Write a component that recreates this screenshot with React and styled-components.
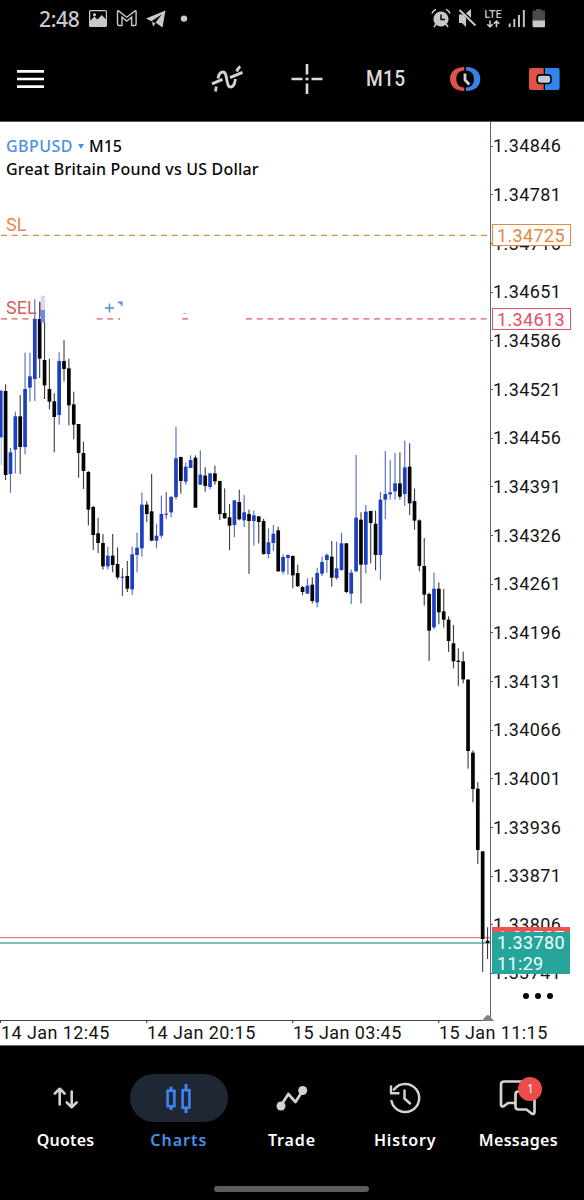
import React from "react";
import styled, { createGlobalStyle } from "styled-components";

const Global = createGlobalStyle`
  * { box-sizing: border-box; }
  body { margin: 0; background: #000; }
  svg { display: block; flex: none; }
`;

const rounded = `"Noto Sans", "Open Sans", sans-serif`;
const numeric = `Roboto, "Liberation Sans", sans-serif`;

const Screen = styled.div`
  width: 584px;
  height: 1200px;
  display: flex;
  flex-direction: column;
  background: #000;
  overflow: hidden;
`;

const StatusBar = styled.header`
  height: 38px;
  display: flex;
  justify-content: space-between;
  padding: 0 38px 0 39px;
  color: #c9c9c9;
`;

const Clock = styled.span`
  width: 49px;
  font: 500 21px/38px ${rounded};
  letter-spacing: -0.3px;
  white-space: nowrap;
`;

const StatusGroup = styled.div`
  display: flex;
`;

const Toolbar = styled.div`
  height: 83px;
  display: flex;
  align-items: center;
  padding: 0 24px 1px 16px;
`;

const ToolButton = styled.button`
  display: flex;
  align-items: center;
  justify-content: center;
  border: 0;
  padding: 0;
  margin-left: ${(p) => p.$gap || 0}px;
  width: ${(p) => p.$w || 32}px;
  height: 40px;
  background: none;
  color: #dcdcdc;
  font: 500 22px/40px ${numeric};
  letter-spacing: 0.4px;
`;

const Condensed = styled.span`
  transform: scaleX(0.87);
`;

const Chart = styled.main`
  position: relative;
  height: 925px;
  display: grid;
  grid-template-columns: 490px 94px;
  grid-template-rows: 898px 25px;
  border-top: 1px solid #55555a;
  border-bottom: 1px solid #666;
  background: #fff;
  overflow: hidden;
`;

const Plot = styled.div`
  position: relative;
  z-index: 1;
`;

const Heading = styled.div`
  position: absolute;
  top: 13px;
  left: 6px;
  font: 500 16px/23px ${rounded};
  color: #080808;
  white-space: nowrap;
`;

const SymbolLine = styled.div`
  display: flex;
  align-items: center;
`;

const SymbolName = styled.span`
  width: 68px;
  color: #4a90ea;
  letter-spacing: 0.45px;
`;

const Caret = styled.span`
  width: 6px;
  margin: 0 5px 0 4px;
  border: 3px solid transparent;
  border-top: 5px solid #4a90ea;
  border-bottom: 0;
`;

const PairName = styled.div`
  letter-spacing: 0.18px;
`;

const LevelName = styled.span`
  position: absolute;
  left: 6px;
  top: ${(p) => p.$top}px;
  font: 400 18px/22px ${numeric};
  color: ${(p) => p.$color};
`;

const Scale = styled.div`
  position: relative;
  border-left: 1px solid #64646e;
`;

const Prices = styled.div`
  height: 898px;
  overflow: hidden;
`;

const Price = styled.div`
  height: 48.66px;
  display: flex;
  align-items: center;
  font: 400 18px/22px ${numeric};
  letter-spacing: 0.4px;
  color: #141414;
  &::before {
    content: "";
    width: 2px;
    height: 1px;
    background: #555;
  }
`;

const PriceBox = styled.div`
  position: absolute;
  left: 1px;
  top: ${(p) => p.$top}px;
  width: 79px;
  height: 22px;
  padding-left: 4px;
  border: 1px solid ${(p) => p.$color};
  background: #fff;
  color: ${(p) => p.$color};
  font: 400 18px/21px ${numeric};
  letter-spacing: 0.35px;
`;

const Quote = styled.div`
  position: absolute;
  left: 1px;
  top: ${(p) => p.$top}px;
  width: 78px;
  height: ${(p) => p.$h}px;
  padding-left: 5px;
  background: ${(p) => p.$color};
  color: #f3fffd;
  font: 400 18px/21px ${numeric};
  letter-spacing: 0.35px;
`;

const More = styled.div`
  position: absolute;
  left: 32px;
  top: 871px;
  display: flex;
  gap: 6px;
`;

const Dot = styled.i`
  width: 6px;
  height: 6px;
  border-radius: 50%;
  background: #000;
`;

const TimeAxis = styled.div`
  grid-column: 1 / -1;
  display: flex;
  padding-left: 1px;
`;

const Time = styled.span`
  width: 146px;
  flex: none;
  font: 400 18px/26px ${numeric};
  letter-spacing: 0.42px;
  color: #141414;
  white-space: nowrap;
`;

const Nav = styled.nav`
  height: 110px;
  display: flex;
  padding: 28px 9px 0 9px;
`;

const NavItem = styled.div`
  width: 113.2px;
  display: flex;
  flex-direction: column;
  align-items: center;
  color: ${(p) => (p.$active ? "#478fee" : "#fff")};
`;

const Pill = styled.div`
  width: 98px;
  height: 48px;
  display: flex;
  align-items: center;
  justify-content: center;
  border-radius: 24px;
  background: ${(p) => (p.$active ? "#202734" : "transparent")};
`;

const NavLabel = styled.span`
  margin-top: 6px;
  font: 600 16px/24px ${rounded};
  letter-spacing: ${(p) => p.$track}px;
  white-space: nowrap;
`;

const IconWrap = styled.div`
  position: relative;
`;

const Badge = styled.span`
  position: absolute;
  left: 19px;
  top: -3px;
  width: 24px;
  height: 24px;
  border-radius: 50%;
  background: #ee4b4b;
  color: #fff;
  text-align: center;
  font: 400 12px/24px ${rounded};
`;

const HomeBar = styled.div`
  width: 155px;
  height: 6px;
  margin: 30px 0 0 214px;
  border-radius: 3px;
  background: #5c5c5c;
`;

const UP = "u";
const DOWN = "b";
const FLAT = "f";
const STEP = 4.868;
const FIRST_X = 5.6;
const TOP = 122;

// Each run: offset in px, then [direction, high, open/close top, open/close bottom, low] in third-pixels.
const RUNS = [
  [290, [
    [DOWN, 283, 303, 555, 570], [UP, 474, 487, 552, 608], [UP, 365, 379, 479, 550], [DOWN, 315, 379, 471, 552],
    [UP, 188, 297, 471, 493], [UP, 188, 259, 293, 335], [UP, 28, 87, 267, 333], [DOWN, 35, 87, 206, 264],
    [DOWN, 95, 210, 286, 327], [DOWN, 206, 297, 335, 358], [DOWN, 310, 334, 381, 487], [UP, 187, 213, 375, 404],
    [DOWN, 151, 213, 237, 274], [DOWN, 206, 235, 346, 406], [DOWN, 305, 343, 404, 448], [DOWN, 402, 402, 489, 563],
    [DOWN, 455, 489, 543, 597], [DOWN, 543, 546, 659, 706], [DOWN, 647, 651, 735, 780], [DOWN, 683, 730, 759, 789],
    [DOWN, 732, 759, 829, 839], [UP, 770, 797, 829, 839], [DOWN, 732, 797, 825, 847], [DOWN, 772, 822, 862, 868],
    [FLAT, 835, 860, 863, 918], [DOWN, 813, 858, 896, 906], [UP, 770, 793, 898, 915], [UP, 728, 773, 795, 847],
    [UP, 608, 644, 775, 800], [DOWN, 634, 644, 672, 696], [DOWN, 552, 664, 752, 754], [UP, 702, 737, 752, 775],
    [UP, 617, 672, 737, 745],
  ]],
  [400, [
    [FLAT, 276, 341, 344, 356], [UP, 288, 291, 337, 352], [UP, 80, 175, 291, 299], [DOWN, 170, 171, 243, 281],
    [UP, 187, 200, 245, 254], [UP, 166, 180, 204, 204], [DOWN, 166, 173, 323, 323], [UP, 151, 224, 254, 254],
    [DOWN, 202, 227, 258, 275], [UP, 219, 220, 261, 268], [DOWN, 197, 220, 244, 254], [DOWN, 242, 243, 342, 360],
    [DOWN, 265, 339, 355, 356], [DOWN, 312, 352, 377, 451], [UP, 300, 301, 375, 411], [DOWN, 269, 306, 358, 361],
    [UP, 285, 337, 361, 381], [DOWN, 329, 342, 363, 522], [UP, 332, 346, 363, 437], [DOWN, 348, 349, 366, 430],
    [DOWN, 356, 363, 462, 464], [UP, 385, 427, 462, 475], [UP, 375, 401, 429, 453], [DOWN, 380, 391, 514, 515],
  ]],
  [430, [
    [UP, 373, 381, 425, 433], [UP, 373, 375, 384, 434], [DOWN, 376, 378, 436, 475], [DOWN, 404, 429, 469, 470],
    [DOWN, 468, 471, 486, 495], [UP, 445, 467, 491, 491], [DOWN, 442, 464, 513, 520], [UP, 413, 429, 517, 532],
    [UP, 380, 396, 431, 438], [UP, 370, 375, 390, 428], [DOWN, 333, 380, 443, 470], [UP, 335, 415, 444, 449],
    [UP, 308, 340, 420, 422], [DOWN, 339, 340, 486, 489], [UP, 418, 428, 491, 522], [UP, 75, 263, 424, 425],
    [DOWN, 247, 269, 404, 520], [UP, 225, 245, 404, 430], [DOWN, 242, 243, 279, 400], [DOWN, 242, 281, 375, 421],
    [UP, 186, 209, 375, 451], [UP, 63, 192, 209, 268], [UP, 91, 187, 193, 209], [UP, 69, 160, 184, 209],
    [DOWN, 67, 160, 200, 209], [UP, 32, 112, 192, 228], [DOWN, 40, 110, 220, 255], [DOWN, 176, 213, 272, 299],
    [DOWN, 268, 271, 408, 424], [DOWN, 324, 408, 494, 527], [DOWN, 488, 492, 602, 693], [UP, 428, 476, 592, 598],
    [DOWN, 457, 476, 547, 583], [DOWN, 477, 544, 569, 593], [DOWN, 559, 569, 633, 666], [DOWN, 585, 640, 694, 715],
  ]],
  [640, [
    [DOWN, 25, 62, 66, 138], [DOWN, 35, 64, 118, 130], [DOWN, 117, 119, 333, 386], [DOWN, 331, 338, 447, 487],
    [DOWN, 426, 446, 630, 672], [DOWN, 633, 634, 897, 996], [DOWN, 862, 902, 909, 957],
  ]],
];

const CANDLES = RUNS.flatMap(([base, rows]) =>
  rows.map(([dir, ...ys]) => [dir, ...ys.map((v) => base + v / 3 - TOP)])
);

const BODY = { u: "#1d3fc0", b: "#050505", f: "#4a1fa8" };
const WICK = { u: "#4c68c6", b: "#3c3c38", f: "#6238b8" };

function Candle({ index, data }) {
  const [dir, high, top, bottom, low] = data;
  const x = FIRST_X + index * STEP;
  return (
    <g>
      <rect x={x - 0.55} y={high} width="1.1" height={low - high} fill={WICK[dir]} />
      <rect x={x - 1.85} y={top} width="3.7" height={Math.max(bottom - top, 1)} fill={BODY[dir]} />
    </g>
  );
}

function PlotDrawing() {
  return (
    <svg width="490" height="898" viewBox="0 0 490 898" overflow="visible">
      <path d="M1 113.4H490" stroke="#dc8d4c" strokeWidth="1.3" strokeDasharray="6 4.667" />
      <path d="M1 196.8H34M96.5 196.8H120M182 196.8H188M246 196.8H490" stroke="#d75b60" strokeWidth="1.3" strokeDasharray="6 4.667" />
      <path d="M0 815.7H490" stroke="#e58080" strokeWidth="1.2" />
      <path d="M0 821H490" stroke="#58aaa0" strokeWidth="1.3" />
      <rect x="0" y="268.5" width="2.6" height="47" fill="#1d3fc0" />
      <rect x="0.7" y="315" width="1" height="28" fill="#a8b4e0" />
      {CANDLES.map((c, i) => <Candle key={i} index={i} data={c} />)}
      <path d="M40.6 180v14" stroke="#c85a76" strokeWidth="1.2" />
      <rect x="40.7" y="173.5" width="4.3" height="15" rx="1" fill="#dcd5f6" />
      <rect x="40.7" y="188" width="4.3" height="12.5" fill="#6d8ae6" />
      <path d="M105 186h9M109.5 181.5v9" stroke="#4c8bd6" strokeWidth="1.5" />
      <path d="M117.5 180.2h4.500v4M119 180l2.500 2.500" fill="none" stroke="#5b91d6" strokeWidth="1.2" />
      <path d="M183.5 191.500h2" stroke="#7ba7de" strokeWidth="1" />
      <path d="M0 898.500H490M0.500 898.500v2.500M146.700 898.500v2.500M292.700 898.500v2.500M438.700 898.500v2.500" fill="none" stroke="#3d4643" strokeWidth="1.1" />
      <path d="M481.500 899l5-5.500q1.300-1 2.600 0l5 5.500z" fill="#808083" />
    </svg>
  );
}

const PRICES = ["1.34846", "1.34781", "1.34716", "1.34651", "1.34586", "1.34521", "1.34456", "1.34391", "1.34326",
  "1.34261", "1.34196", "1.34131", "1.34066", "1.34001", "1.33936", "1.33871", "1.33806", "1.33741"];

const line = { fill: "none", stroke: "#d2d2d2", strokeLinecap: "round", strokeLinejoin: "round" };

const NotificationIcons = () => (
  <svg width="104" height="38" viewBox="88 0 104 38" fill="#c9c9c9">
    <path fillRule="evenodd" d="M90.500 10h15q1.500 0 1.500 1.500v14q0 1.500-1.500 1.500h-15q-1.500 0-1.500-1.500v-14q0-1.500 1.500-1.500zM90.300 11.300v9.500l4-4.300 3.200 3 4.300-4.500 4 4.200v-7.900zM94.500 13.200a1.600 1.600 0 1 1-.01 0z" />
    <path d="M117.500 11.500q0-1.200 1-.6l8.300 6.300 8.300-6.300q1-.6 1 .6V24q0 1.500-1.500 1.500h-3v-8.200l-4.800 3.800-4.800-3.800v8.200h-3q-1.500 0-1.500-1.500z" fill="none" stroke="#c9c9c9" strokeWidth="1.400" />
    <path d="M146 18.500L165.500 10.500 162.500 27.500 155.500 22.500 162 14.200 151.500 21.200z" />
    <path d="M152 21.500l3.500 2-2.500 3z" />
    <circle cx="184" cy="18.600" r="3.200" />
  </svg>
);

const SystemIcons = () => (
  <svg width="116" height="38" viewBox="430 0 116 38" fill="#c9c9c9">
    <circle cx="441" cy="19" r="7.600" />
    <path d="M441 14.500v5h4" fill="none" stroke="#000" strokeWidth="1.400" />
    <path d="M432 13.500q1-3 4-4M450 13.500q-1-3-4-4M436 24l-2 3M446 24l2 3" fill="none" stroke="#c9c9c9" strokeWidth="1.600" />
    <path d="M459 14.500h4l3 3.500v9l-4-4h-3zM465 14l6-5v10.500z" />
    <path d="M460.500 9L477 24.500" stroke="#000" strokeWidth="1.400" />
    <path d="M459.500 10L475.500 25.500" stroke="#c9c9c9" strokeWidth="2" />
    <text x="484.300" y="17.500" fontFamily="Lato, sans-serif" fontSize="11" fontWeight="600" letterSpacing="0">LTE</text>
    <path d="M490 20.500v6M487.300 24.200l2.700 2.700 2.700-2.700M496.500 27.300v-6M493.800 23.800l2.700-2.700 2.700 2.700" fill="none" stroke="#c9c9c9" strokeWidth="1.600" />
    <path d="M509.700 23.500V27M514.300 19V27M519 15V27M523.800 10V27" stroke="#c9c9c9" strokeWidth="1.900" />
    <path d="M536 9h5v1.500h4v10.500h-12.500V10.500h3.500z" fill="#4a4a4a" />
    <path d="M532.500 20.500h12.500V26q0 1.200-1.200 1.200h-10.100q-1.200 0-1.200-1.200z" />
  </svg>
);

const MenuIcon = () => (
  <svg width="28" height="20"><path d="M1 2.300h27M1 10h27M1 17.700h27" stroke="#fff" strokeWidth="2.700" /></svg>
);

const IndicatorIcon = () => (
  <svg width="34" height="30" viewBox="210 64 34 30">
    <path d="M215.500 91.500l.8-5M218 78.500q1-6.500 5-6.500c5 0 2.500 15 7.500 15 3 0 4-2.500 5-8M236.800 71.500q1-3.500 3.500-5" {...line} strokeWidth="2.800" strokeLinecap="butt" />
    <path d="M212 83.800l10.500-4.500M230 77.600l12.500-5.200" {...line} strokeWidth="3" strokeLinecap="butt" />
  </svg>
);

const CrossIcon = () => (
  <svg width="32" height="32" viewBox="291 63 32 32">
    <path d="M307 64v10.500M307 83.500V94M291.500 79h11M311.500 79h11M305.500 79h3" stroke="#dcdcdc" strokeWidth="2.600" />
  </svg>
);

const SessionIcon = () => (
  <svg width="32" height="28" viewBox="449 65 32 28">
    <path d="M464.300 67C455 67 450 72 450 79s5 12 14.300 12v-3.500c-5 0-8-3.500-8-8.500s3-8.500 8-8.500z" fill="#dc5348" />
    <path d="M466 67c9.300 0 14.300 5 14.300 12s-5 12-14.300 12v-3.500c5 0 8-3.500 8-8.500s-3-8.500-8-8.500z" fill="#3584ea" />
    <path d="M465 73.500V80l4.300 4.500" fill="none" stroke="#ccd2d8" strokeWidth="2.800" />
  </svg>
);

const TradeBoxIcon = () => (
  <svg width="32" height="24" viewBox="528 67 32 24">
    <path d="M531 68h12.700v22H531q-2 0-2-2V70q0-2 2-2z" fill="#e05245" />
    <path d="M545 68h12.600q2 0 2 2v18q0 2-2 2H545z" fill="#2f86f0" />
    <rect x="537.200" y="74.900" width="13.800" height="8.600" rx="3" fill="#c3cad1" stroke="#000" strokeWidth="1.600" />
  </svg>
);

const QuotesIcon = () => (
  <svg width="28" height="26" viewBox="52 85 28 26">
    <path d="M59.700 104.500V89M54.800 93.500l4.900-4.700 4.900 4.700M71.700 91.500V107M66.800 102.500l4.900 4.700 4.900-4.700" {...line} strokeWidth="2.600" />
  </svg>
);

const CandlesIcon = () => (
  <svg width="30" height="32" viewBox="164 82 30 32">
    <g fill="none" stroke="#3d83f2" strokeWidth="2.600">
      <rect x="167.600" y="90.700" width="6.800" height="15.500" />
      <path d="M171 86.700v4M171 106.500v3.500M186 84v6M186 108v5" strokeWidth="3" />
      <rect x="182.600" y="90.200" width="6.800" height="17.500" />
    </g>
  </svg>
);

const TradeIcon = () => (
  <svg width="34" height="28" viewBox="275 84 34 28">
    <path d="M281 105.500l7.300-11.500 7.200 8L302.500 91" {...line} strokeWidth="2.700" />
    <circle cx="281" cy="106" r="4.500" fill="#d2d2d2" /><circle cx="302.700" cy="90.500" r="4.500" fill="#d2d2d2" />
  </svg>
);

const HistoryIcon = () => (
  <svg width="34" height="34" viewBox="388 81 34 34">
    <path d="M391.500 101A14 14 0 1 0 394 89.500M391 86.500v6.700h7.500M404.500 90.500v8l5.500 5" {...line} strokeWidth="2.500" />
  </svg>
);

const MessagesIcon = () => (
  <svg width="38" height="36" viewBox="499 80 38 36">
    <path d="M525 81.500H504q-3 0-3 3v20q0 3 3 1.500l4-3h7M518 91.500q-2.500 0-2.500 3v12q0 3 3 3h8l5 4q3 1.500 3-1.500V94q0-2.500-2.500-2.500z" {...line} strokeWidth="2.700" />
  </svg>
);

const TABS = [
  ["Quotes", QuotesIcon, 0.2],
  ["Charts", CandlesIcon, 1],
  ["Trade", TradeIcon, 0.9],
  ["History", HistoryIcon, 0.85],
  ["Messages", MessagesIcon, 0.3],
];

export default function App() {
  return (
    <Screen>
      <Global />
      <StatusBar>
        <StatusGroup><Clock>2:48</Clock><NotificationIcons /></StatusGroup>
        <SystemIcons />
      </StatusBar>
      <Toolbar>
        <ToolButton $w={28}><MenuIcon /></ToolButton>
        <ToolButton $gap={166} $w={34}><IndicatorIcon /></ToolButton>
        <ToolButton $gap={47}><CrossIcon /></ToolButton>
        <ToolButton $gap={42} $w={42}><Condensed>M15</Condensed></ToolButton>
        <ToolButton $gap={42}><SessionIcon /></ToolButton>
        <ToolButton $gap={47}><TradeBoxIcon /></ToolButton>
      </Toolbar>
      <Chart>
        <Plot>
          <PlotDrawing />
          <Heading>
            <SymbolLine><SymbolName>GBPUSD</SymbolName><Caret />M15</SymbolLine>
            <PairName>Great Britain Pound vs US Dollar</PairName>
          </Heading>
          <LevelName $top={92} $color="#df8a53">SL</LevelName>
          <LevelName $top={175} $color="#dc5c56">SEL</LevelName>
        </Plot>
        <Scale>
          <Prices>{PRICES.map((p) => <Price key={p}>{p}</Price>)}</Prices>
          <PriceBox $top={102} $color="#e2883f">1.34725</PriceBox>
          <PriceBox $top={186} $color="#e3525f">1.34613</PriceBox>
          <Quote $top={805} $h={24} $color="#ec5350">1.33787</Quote>
          <Quote $top={810} $h={42} $color="#26a69a">1.33780<br />11:29</Quote>
          <More><Dot /><Dot /><Dot /></More>
        </Scale>
        <TimeAxis>
          {["14 Jan 12:45", "14 Jan 20:15", "15 Jan 03:45", "15 Jan 11:15"].map((t) => <Time key={t}>{t}</Time>)}
        </TimeAxis>
      </Chart>
      <Nav>
        {TABS.map(([name, Icon, track]) => (
          <NavItem key={name} $active={name === "Charts"}>
            <Pill $active={name === "Charts"}>
              <IconWrap><Icon />{name === "Messages" && <Badge>1</Badge>}</IconWrap>
            </Pill>
            <NavLabel $track={track}>{name}</NavLabel>
          </NavItem>
        ))}
      </Nav>
      <HomeBar />
    </Screen>
  );
}
